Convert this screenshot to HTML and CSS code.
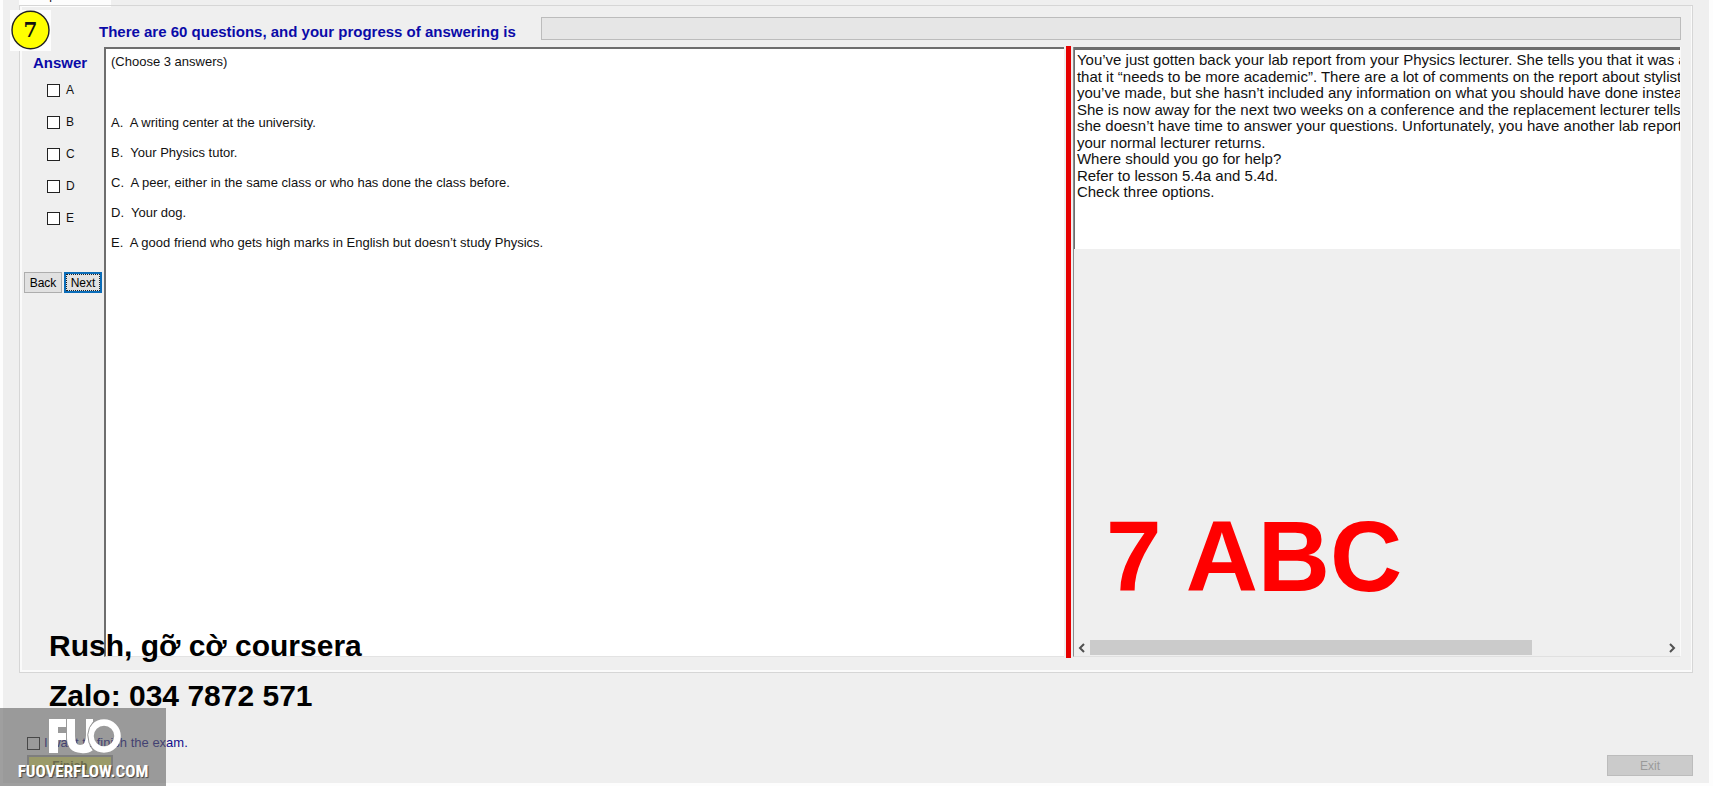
FILE: index.html
```html
<!DOCTYPE html>
<html lang="en">
<head>
<meta charset="utf-8">
<title>Exam client</title>
<link rel="stylesheet" href="styles.css">
</head>
<body>
<main class="window">
  <div class="tabs"><span class="tab">Multiple Choices</span></div>
  <section class="group">
    <header class="top">
      <div class="badge"><svg width="41" height="41" viewBox="0 0 41 41"><ellipse cx="20.5" cy="20" rx="18.5" ry="18.8" fill="#ff0" stroke="#222" stroke-width="1.4"/></svg><span class="badge-num">7</span></div>
      <label class="heading" for="progress">There are 60 questions, and your progress of answering is</label>
      <progress class="progress" id="progress" value="0" max="60"></progress>
    </header>
    <div class="body">
      <form class="answers">
        <h2 class="answers-title">Answer</h2>
        <label class="option"><input type="checkbox">A</label>
        <label class="option"><input type="checkbox">B</label>
        <label class="option"><input type="checkbox">C</label>
        <label class="option"><input type="checkbox">D</label>
        <label class="option"><input type="checkbox">E</label>
        <div class="nav">
          <button type="button" class="btn">Back</button>
          <button type="button" class="btn btn-focus">Next</button>
        </div>
      </form>
      <article class="question">
        <p class="hint">(Choose 3 answers)</p>
        <p class="choice">A.&nbsp; A writing center at the university.</p>
        <p class="choice">B.&nbsp; Your Physics tutor.</p>
        <p class="choice">C.&nbsp; A peer, either in the same class or who has done the class before.</p>
        <p class="choice">D.&nbsp; Your dog.</p>
        <p class="choice">E.&nbsp; A good friend who gets high marks in English but doesn’t study Physics.</p>
      </article>
      <div class="splitter"></div>
      <aside class="side">
        <div class="passage">
          <p>You’ve just gotten back your lab report from your Physics lecturer. She tells you that it was a</p>
          <p>that it “needs to be more academic”. There are a lot of comments on the report about stylistic</p>
          <p>you’ve made, but she hasn’t included any information on what you should have done instead</p>
          <p>She is now away for the next two weeks on a conference and the replacement lecturer tells y</p>
          <p>she doesn’t have time to answer your questions. Unfortunately, you have another lab report</p>
          <p>your normal lecturer returns.</p>
          <p>Where should you go for help?</p>
          <p>Refer to lesson 5.4a and 5.4d.</p>
          <p>Check three options.</p>
        </div>
        <div class="stamp">7 ABC</div>
        <div class="scroll">
          <button type="button" class="arrow" aria-label="Scroll left"><svg width="8" height="10" viewBox="0 0 8 10"><path d="M6 1L2 5l4 4" fill="none" stroke="#505050" stroke-width="2"/></svg></button>
          <div class="track"><div class="thumb"></div></div>
          <button type="button" class="arrow" aria-label="Scroll right"><svg width="8" height="10" viewBox="0 0 8 10"><path d="M2 1l4 4-4 4" fill="none" stroke="#505050" stroke-width="2"/></svg></button>
        </div>
      </aside>
    </div>
  </section>
  <footer class="footer">
    <div class="finish">
      <label class="finish-label"><input type="checkbox">I want to finish the exam.</label>
      <button type="button" class="finish-btn" disabled>Finish</button>
    </div>
    <button type="button" class="exit" disabled>Exit</button>
  </footer>
</main>
<div class="contact"><p>Rush, gỡ cờ coursera</p><p>Zalo: 034 7872 571</p></div>
<div class="logo">
  <svg class="logo-mark" width="72" height="36" viewBox="0 0 72 36" role="img" aria-label="FUO">
    <path d="M2 0H19V8H11V14H19V21H11V34H2Z" fill="#fff"/>
    <path d="M20 0H28V17Q28 26 33 26Q39 26 39 16V0H46V3Q40 9 41 20Q42 28 46 31Q41 35 34 34Q20 33 20 19Z" fill="#fff"/>
    <circle cx="57" cy="17" r="13.5" fill="none" stroke="#fff" stroke-width="6.5"/>
    <path d="M47 2Q35 15 46 31" fill="none" stroke="#999" stroke-width="1"/>
  </svg>
  <span class="logo-text">FUOVERFLOW.COM</span>
</div>
</body>
</html>
```
FILE: styles.css
```css
* { box-sizing: border-box; }
body {
  margin: 0;
  position: relative;
  min-height: 100vh;
  overflow: hidden;
  background: #fdfdfd;
  color: #111;
  font: 13px/16px "Liberation Sans", Arial, sans-serif;
}
p, h2 { margin: 0; }
button { font: inherit; padding: 0; }
input[type="checkbox"] {
  appearance: none;
  flex: none;
  width: 13px;
  height: 13px;
  margin: 0;
  border: 1px solid #222;
  background: #fff;
}
.window {
  display: flex;
  flex-direction: column;
  min-height: calc(100vh - 3px);
  margin: 0 4px 0 3px;
  padding: 0 16px;
  background: #efefef;
}
.tabs { height: 5px; }
.tab {
  display: flex;
  align-items: flex-end;
  width: 92px;
  height: 7px;
  padding: 0 0 6px 5px;
  overflow: hidden;
  background: #fdfdfd;
  font-size: 12px;
  line-height: 12px;
  white-space: nowrap;
}
.group {
  flex: 1;
  display: flex;
  flex-direction: column;
  border: 1px solid #d6d6d6;
  box-shadow: inset 2px -2px 0 #fafafa, inset -1px 0 0 #fafafa;
  padding: 4px 11px 15px 4px;
}
.top { display: flex; align-items: flex-start; height: 37px; }
.badge {
  position: relative;
  flex: none;
  width: 41px;
  height: 41px;
  margin-left: -14px;
  background: #fdfdfd;
}
.badge-num {
  position: absolute;
  inset: 0;
  text-align: center;
  font: bold 20px/40px "DejaVu Serif", serif;
}
.heading {
  width: 442px;
  padding: 14px 0 0 48px;
  color: #0a0aa8;
  font-size: 15px;
  font-weight: bold;
  white-space: nowrap;
  flex: none;
}
.progress {
  appearance: none;
  flex: 1;
  height: 23px;
  margin-top: 7px;
  margin-left: 48px;
  border: 1px solid #bcbcbc;
  background: #e6e6e6;
}
.progress::-webkit-progress-bar { background: #e6e6e6; }
.body { flex: 1; display: flex; min-height: 0; }
.answers { flex: none; width: 80px; display: flex; flex-direction: column; }
.answers-title {
  padding: 8px 0 11px 9px;
  color: #0a0aa8;
  font-size: 15px;
  line-height: 16px;
}
.option {
  display: flex;
  align-items: center;
  gap: 6px;
  height: 16px;
  margin: 0 0 16px 23px;
  font-size: 12px;
}
.nav { display: flex; gap: 2px; margin-top: 30px; font-size: 12px; }
.btn {
  width: 38px;
  height: 21px;
  border: 1px solid #adadad;
  background: #e1e1e1;
}
.btn-focus {
  border: 2px solid #0a6cb8;
  outline: 1px dotted #222;
  outline-offset: -3px;
}
.question {
  flex: 61;
  min-width: 0;
  border: solid #6e6e6e;
  border-width: 2px 0 0 2px;
  border-bottom: 1px solid #e3e3e3;
  background: #fff;
  padding: 5px;
}
.hint { margin-bottom: 45px; }
.choice { margin-bottom: 14px; }
.splitter {
  flex: none;
  width: 5px;
  margin: -1px 2px;
  background: #e60000;
}
.side {
  position: relative;
  flex: 39;
  min-width: 0;
  display: flex;
  flex-direction: column;
  border-left: 1px solid #8c8c8c;
  border-right: 1px solid #fafafa;
  border-bottom: 1px solid #e0e0e0;
}
.passage {
  height: 202px;
  padding: 2px 0 0 2px;
  overflow: hidden;
  border: solid #6e6e6e;
  border-width: 3px 0 0 1px;
  background: #fff;
  font-size: 15px;
  white-space: nowrap;
}
.passage p:nth-child(even) { line-height: 17px; }
.stamp {
  position: absolute;
  left: 32px;
  bottom: 50px;
  color: #f00;
  font-size: 100px;
  font-weight: bold;
  line-height: 100px;
}
.scroll { display: flex; height: 16px; margin-top: auto; }
.arrow {
  width: 16px;
  border: 0;
  background: none;
  display: flex;
  align-items: center;
  justify-content: center;
}
.track { flex: 1; }
.thumb { width: 77%; height: 15px; background: #cbcbcb; }
.footer {
  display: flex;
  justify-content: space-between;
  align-items: flex-end;
  height: 110px;
  padding: 0 0 7px 8px;
}
.finish-label {
  display: flex;
  align-items: center;
  gap: 4px;
  margin-bottom: 4px;
  color: #14108c;
}
.finish-label input { background: none; }
.finish-btn, .exit {
  width: 86px;
  height: 21px;
  border: 1px solid #bcbcbc;
  background: #cbcbcb;
  color: #9a9a9a;
  font-size: 12px;
}
.finish-btn {
  display: block;
  border: 2px solid #aaa;
  background: #f0f078;
  color: #777730;
  font-weight: bold;
}
.contact {
  position: absolute;
  left: 49px;
  bottom: 65px;
  color: #000;
  font-size: 30px;
  font-weight: bold;
  line-height: 50px;
}
.logo {
  position: absolute;
  left: 0;
  bottom: 0;
  width: 166px;
  height: 78px;
  padding-top: 11px;
  display: flex;
  flex-direction: column;
  align-items: center;
  gap: 6px;
  background: rgba(96, 96, 96, 0.6);
}
.logo-mark { overflow: visible; }
.logo-text {
  color: #fff;
  font: bold 17px/20px "Liberation Sans Narrow", "Roboto Condensed", "Open Sans Condensed", "Liberation Sans", sans-serif;
  text-shadow: 1px 1px 1px #444;
}
```
